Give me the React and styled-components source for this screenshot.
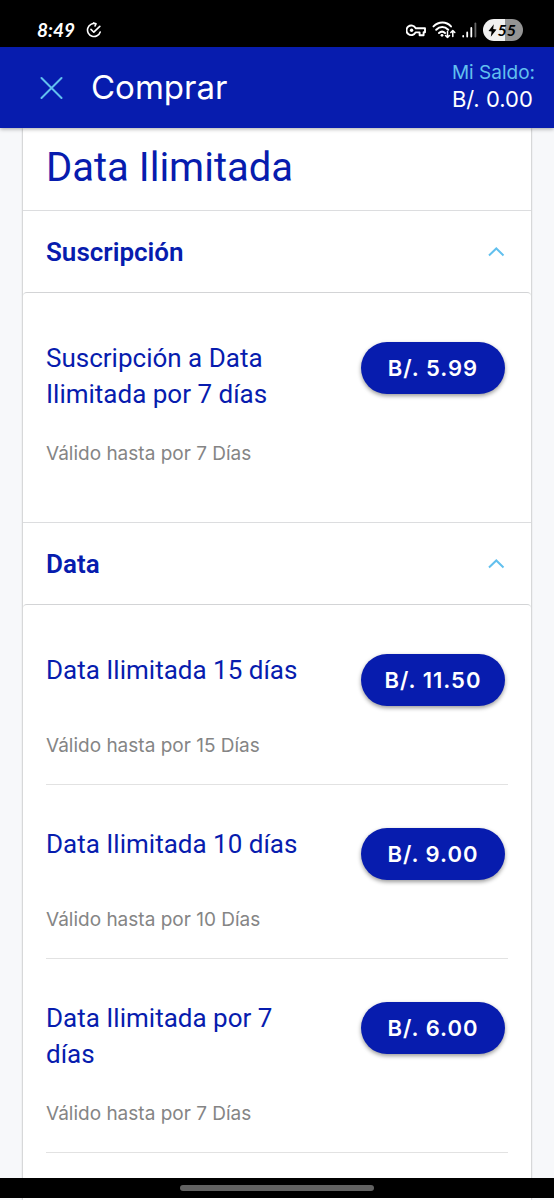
import React, { useState } from "react";
import styled, { createGlobalStyle } from "styled-components";

const blue = "#071cae";
const sky = "#62c0ee";

const GlobalStyle = createGlobalStyle`
  * { box-sizing: border-box; }
  body {
    margin: 0;
    background: #f7f8fa;
    color: ${blue};
    font-family: Roboto, sans-serif;
  }
  h1, h2, h3, p { margin: 0; font-weight: 400; }
  button { border: 0; padding: 0; background: none; color: inherit; font: inherit; cursor: pointer; }
`;

const Screen = styled.div`
  height: 100vh;
  display: flex;
  flex-direction: column;
  overflow: hidden;
`;

const StatusBar = styled.div`
  flex: none;
  height: 47px;
  padding: 14px 31px 0 37px;
  display: flex;
  justify-content: space-between;
  align-items: flex-start;
  background: #000;
  color: #fff;
`;

const StatusGroup = styled.div`
  height: 32px;
  display: flex;
  align-items: center;
  gap: ${(p) => p.$gap}px;
`;

const Clock = styled.time`
  font: italic 700 19px/24px Lato, sans-serif;
`;

const Battery = styled.span`
  width: 40px;
  height: 22px;
  padding: 0 7px 0 5px;
  border-radius: 11px;
  display: flex;
  align-items: center;
  justify-content: space-between;
  background: linear-gradient(90deg, #f1f1f1 56%, #949494 56%);
  color: #000;
  font: italic 700 16px/22px Lato, sans-serif;
`;

const AppBar = styled.header`
  flex: none;
  z-index: 1;
  height: 81px;
  padding: 0 19px 2px 39px;
  display: flex;
  align-items: center;
  background: ${blue};
  color: #fff;
  box-shadow: 0 1px 4px rgba(0, 0, 0, 0.35);
  font-family: Inter, sans-serif;
`;

const CloseButton = styled.button`
  width: 24px;
  height: 24px;
  margin-right: 28px;
  color: ${sky};
`;

const PageTitle = styled.h1`
  flex: 1;
  font-size: 33px;
  line-height: 40px;
`;

const Balance = styled.div`
  margin-bottom: 2px;
  font-size: 22px;
  line-height: 26px;
`;

const BalanceLabel = styled.p`
  color: ${sky};
  font-size: 19px;
`;

const Content = styled.main`
  flex: 1;
  min-height: 0;
  padding: 0 23px;
  overflow: hidden;
`;

const Card = styled.section`
  min-height: 100%;
  background: #fff;
  box-shadow: 0 0 2px rgba(0, 0, 0, 0.4);
`;

const CardTitle = styled.h2`
  height: 82px;
  padding: 16px 23px 0;
  font-size: 40px;
  line-height: 48px;
`;

const Group = styled.section`
  border-top: 1px solid #dcdddf;
`;

const GroupToggle = styled.button`
  width: 100%;
  height: 81px;
  padding: 0 26px 0 23px;
  display: flex;
  align-items: center;
  justify-content: space-between;
`;

const GroupTitle = styled.h2`
  font-size: 26px;
  font-weight: 600;
  line-height: 36px;
`;

const Chevron = styled.svg`
  color: ${sky};
  transform: ${(p) => (p.$open ? "none" : "rotate(180deg)")};
`;

const Panel = styled.div`
  margin-bottom: 12px;
  padding: 6px 23px 18px;
  border-top: 1px solid #d3d4d6;
  border-radius: 4px;
`;

const Offer = styled.article`
  padding: 41px 0 26px;

  &:not(:only-child) {
    border-bottom: 1px solid #e2e2e2;
  }
`;

const OfferHead = styled.div`
  display: flex;
  align-items: flex-start;
  justify-content: space-between;
  gap: 24px;
  margin-bottom: 28px;
`;

const OfferName = styled.h3`
  max-width: 260px;
  padding-bottom: 2px;
  font-size: 26px;
  line-height: 36px;
`;

const PriceButton = styled.button`
  flex: none;
  width: 144px;
  height: 52px;
  margin: 2px 3px 0 0;
  border-radius: 26px;
  background: ${blue};
  color: #fff;
  font: 600 22px/28px Inter, sans-serif;
  letter-spacing: 1px;
  box-shadow: 0 2px 4px rgba(0, 0, 0, 0.4);
`;

const Validity = styled.p`
  color: #858585;
  font: 400 19px/24px Inter, sans-serif;
`;

const GestureBar = styled.div`
  position: fixed;
  inset: auto 0 2px;
  z-index: 2;
  height: 20px;
  display: flex;
  align-items: center;
  justify-content: center;
  background: #000;
`;

const GestureHandle = styled.span`
  width: 35%;
  height: 6px;
  border-radius: 3px;
  background: #626262;
`;

const groups = [
  {
    name: "Suscripción",
    offers: [{ name: "Suscripción a Data Ilimitada por 7 días", price: "5.99", days: 7 }],
  },
  {
    name: "Data",
    offers: [
      { name: "Data Ilimitada 15 días", price: "11.50", days: 15 },
      { name: "Data Ilimitada 10 días", price: "9.00", days: 10 },
      { name: "Data Ilimitada por 7 días", price: "6.00", days: 7 },
    ],
  },
];

function SyncIcon() {
  return (
    <svg width="16" height="16" viewBox="0 0 16 16" fill="none" stroke="currentColor" strokeWidth="1.6" strokeLinecap="round" strokeLinejoin="round" aria-hidden="true">
      <path d="M9.8 1.8A6.5 6.5 0 1 0 14.2 10M7.6.9l2.4.9-1 2.2M5 7.4l2.8 2.8 6-5.8" />
    </svg>
  );
}

function KeyIcon() {
  return (
    <svg width="20" height="13" viewBox="0 0 20 13" fill="none" stroke="currentColor" strokeWidth="1.9" strokeLinejoin="round" aria-hidden="true">
      <path d="M9.6 4.2H19v4h-1.4v3h-4V8.400H9.600A4.800 4.800 0 1 1 9.600 4.200Z" />
      <circle cx="5.600" cy="6.300" r="1.700" fill="currentColor" stroke="none" />
    </svg>
  );
}

function WifiIcon() {
  return (
    <svg width="24" height="18" viewBox="0 0 24 18" fill="none" stroke="currentColor" strokeLinecap="round" strokeLinejoin="round" aria-hidden="true">
      <path strokeWidth="2" d="M1.500 5.400C6.700.300 14.300.300 19 5.400M4.200 8.700c3.600-3.500 8.500-3.500 12 0M7 12c2-1.800 4.100-1.800 6 0" />
      <circle cx="10" cy="14.300" r="1.400" fill="currentColor" stroke="none" />
      <path strokeWidth="1.500" d="M15.500 10.500v6m-2-2 2 2 2-2M20.800 15.500v-6m-2 2 2-2 2 2" />
    </svg>
  );
}

function SignalIcon() {
  return (
    <svg width="15" height="16" viewBox="0 0 15 16" stroke="currentColor" strokeWidth="1.800" strokeLinecap="round" aria-hidden="true">
      <path d="M1.200 14v.6M5.200 10.500v4.100M9.300 6v8.600" />
      <path opacity=".4" d="M13.400 1.500v13.100" />
    </svg>
  );
}

function BoltIcon() {
  return (
    <svg width="9" height="13" viewBox="0 0 9 13" fill="currentColor" aria-hidden="true">
      <path d="M5.800.300.500 6.900l3.100.600L2.800 12.700 8.500 5.400l-3.300-.500Z" />
    </svg>
  );
}

function OfferGroup({ group }) {
  const [open, setOpen] = useState(true);
  return (
    <Group>
      <GroupToggle type="button" aria-expanded={open} onClick={() => setOpen(!open)}>
        <GroupTitle as="span">{group.name}</GroupTitle>
        <Chevron $open={open} width="18" height="12" viewBox="0 0 18 12" fill="none" stroke="currentColor" strokeWidth="2" aria-hidden="true">
          <path d="M2 9.500 9.300 2.500l7.200 7" />
        </Chevron>
      </GroupToggle>
      {open && (
        <Panel>
          {group.offers.map((offer) => (
            <Offer key={offer.name}>
              <OfferHead>
                <OfferName>{offer.name}</OfferName>
                <PriceButton type="button">B/. {offer.price}</PriceButton>
              </OfferHead>
              <Validity>Válido hasta por {offer.days} Días</Validity>
            </Offer>
          ))}
        </Panel>
      )}
    </Group>
  );
}

export default function App() {
  return (
    <Screen>
      <GlobalStyle />
      <StatusBar>
        <StatusGroup $gap={11}>
          <Clock>8:49</Clock>
          <SyncIcon />
        </StatusGroup>
        <StatusGroup $gap={6}>
          <KeyIcon />
          <WifiIcon />
          <SignalIcon />
          <Battery>
            <BoltIcon />
            55
          </Battery>
        </StatusGroup>
      </StatusBar>
      <AppBar>
        <CloseButton type="button" aria-label="Cerrar">
          <svg width="24" height="24" viewBox="0 0 24 24" fill="none" stroke="currentColor" strokeWidth="2" strokeLinecap="round" aria-hidden="true">
            <path d="m2.500 3 20 20M22.500 3l-20 20" />
          </svg>
        </CloseButton>
        <PageTitle>Comprar</PageTitle>
        <Balance>
          <BalanceLabel>Mi Saldo:</BalanceLabel>
          <p>B/. 0.00</p>
        </Balance>
      </AppBar>
      <Content>
        <Card>
          <CardTitle>Data Ilimitada</CardTitle>
          {groups.map((group) => (
            <OfferGroup key={group.name} group={group} />
          ))}
        </Card>
      </Content>
      <GestureBar>
        <GestureHandle />
      </GestureBar>
    </Screen>
  );
}
